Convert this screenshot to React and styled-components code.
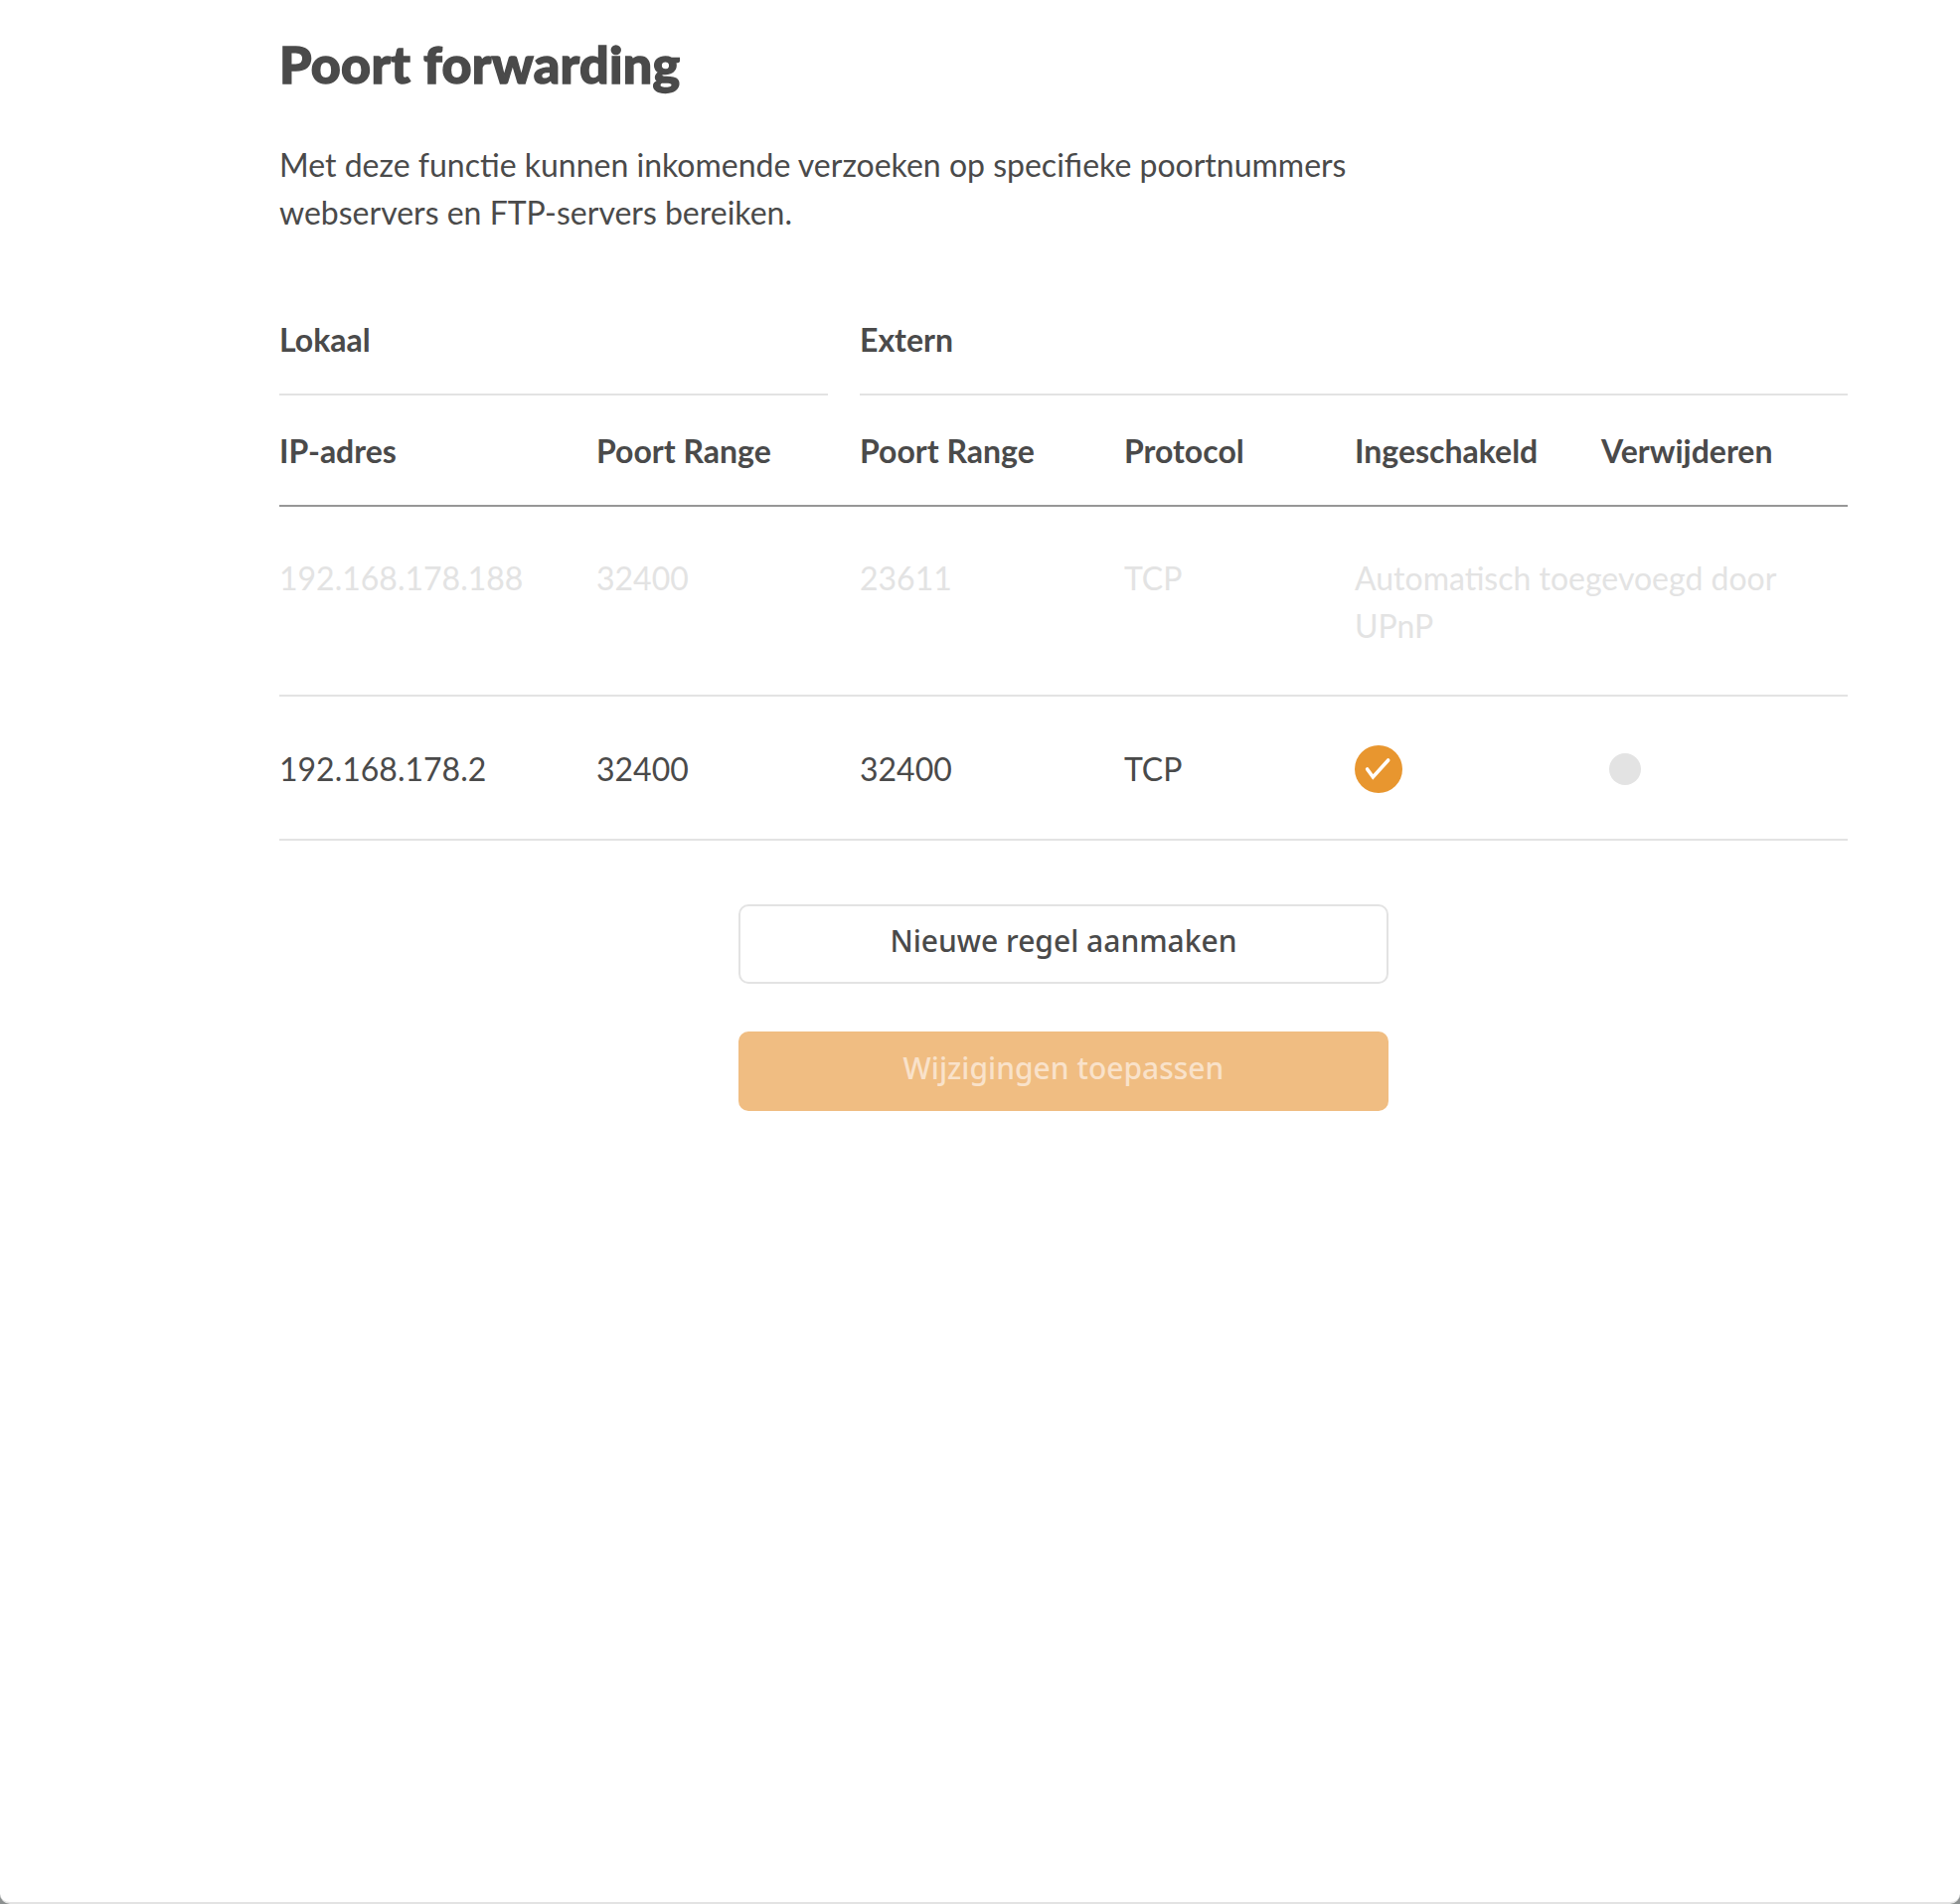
import React from 'react';
import styled, { createGlobalStyle } from 'styled-components';

const GlobalStyle = createGlobalStyle`
  html, body {
    margin: 0;
    padding: 0;
    background: #8c9090;
  }
  body {
    font-family: Lato, "Liberation Sans", sans-serif;
    color: #4a4a4a;
  }
`;

const Panel = styled.div`
  box-sizing: border-box;
  width: 1972px;
  height: 1916px;
  padding: 0 113px 0 281px;
  background: #ffffff;
  border-bottom: 2px solid #e3e3e3;
  border-radius: 0 0 10px 10px;
`;

const Title = styled.h1`
  margin: 0;
  padding-top: 29px;
  font-size: 52px;
  line-height: 70px;
  font-weight: 900;
  letter-spacing: 0.3px;
  -webkit-text-stroke: 1.4px #4a4a4a;
`;

const Intro = styled.p`
  margin: 43px 0 0;
  width: 1100px;
  font-size: 32px;
  line-height: 48px;
  white-space: nowrap;
`;

const GroupRow = styled.div`
  display: grid;
  grid-template-columns: 552px 1fr;
  column-gap: 32px;
  margin-top: 62px;
`;

const GroupHead = styled.div`
  height: 98px;
  padding-top: 22px;
  box-sizing: border-box;
  border-bottom: 2px solid #e3e3e3;
  font-size: 32px;
  line-height: 40px;
  font-weight: 700;
`;

const Row = styled.div`
  display: grid;
  grid-template-columns: 319px 265px 266px 232px 248px 248px;
  box-sizing: border-box;
  border-bottom: 2px solid ${(p) => (p.$head ? '#979797' : '#e3e3e3')};
  height: ${(p) => p.$height}px;
  padding-top: ${(p) => p.$top}px;
  font-size: 32px;
  line-height: 48px;
  font-weight: ${(p) => (p.$head ? 700 : 400)};
  color: ${(p) => (p.$muted ? '#e3e3e3' : '#4a4a4a')};
`;

const Wide = styled.div`
  grid-column: span 2;
`;

const CheckDot = styled.svg`
  display: block;
  width: 48px;
  height: 48px;
`;

const RemoveDot = styled.span`
  display: block;
  width: 32px;
  height: 32px;
  margin: 8px 0 0 8px;
  border-radius: 50%;
  background: #e3e3e3;
`;

const Actions = styled.div`
  display: flex;
  flex-direction: column;
  align-items: center;
  gap: 48px;
  margin-top: 64px;
`;

const Button = styled.button`
  box-sizing: border-box;
  width: 654px;
  height: 80px;
  border-radius: 10px;
  border: ${(p) => (p.$primary ? 'none' : '2px solid #e3e3e3')};
  background: ${(p) => (p.$primary ? '#f0bd82' : '#ffffff')};
  color: ${(p) => (p.$primary ? '#f9e2ca' : '#4a4a4a')};
  font-family: "Noto Sans", sans-serif;
  font-size: 30px;
  font-weight: 500;
  padding: 0 0 8px;
`;

const columns = ['IP-adres', 'Poort Range', 'Poort Range', 'Protocol', 'Ingeschakeld', 'Verwijderen'];

export default function App() {
  return (
    <Panel>
      <GlobalStyle />
      <Title>Poort forwarding</Title>
      <Intro>
        Met deze functie kunnen inkomende verzoeken op specifieke poortnummers
        <br />
        webservers en FTP-servers bereiken.
      </Intro>
      <GroupRow>
        <GroupHead>Lokaal</GroupHead>
        <GroupHead>Extern</GroupHead>
      </GroupRow>
      <Row $head $height={112} $top={32}>
        {columns.map((c, i) => (
          <div key={i}>{c}</div>
        ))}
      </Row>
      <Row $muted $height={191} $top={48}>
        <div>192.168.178.188</div>
        <div>32400</div>
        <div>23611</div>
        <div>TCP</div>
        <Wide>Automatisch toegevoegd door UPnP</Wide>
      </Row>
      <Row $height={145} $top={49}>
        <div>192.168.178.2</div>
        <div>32400</div>
        <div>32400</div>
        <div>TCP</div>
        <div>
          <CheckDot viewBox="0 0 48 48" fill="none">
            <circle cx="24" cy="24" r="24" fill="#e8962f" />
            <path d="M12.6 24 L18.4 32 L33.7 15" stroke="#fff" strokeWidth="3.6" strokeLinecap="round" />
          </CheckDot>
        </div>
        <div>
          <RemoveDot />
        </div>
      </Row>
      <Actions>
        <Button>Nieuwe regel aanmaken</Button>
        <Button $primary>Wijzigingen toepassen</Button>
      </Actions>
    </Panel>
  );
}
